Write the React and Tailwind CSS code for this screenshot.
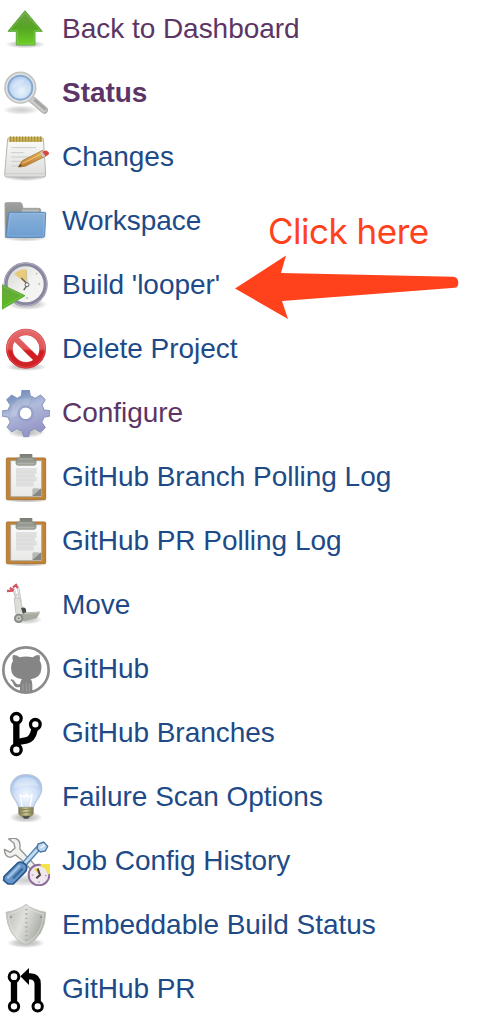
import React from 'react';

function Icon({ children }) {
  return (
    <svg className="h-12 w-12 shrink-0" viewBox="0 0 144 144" fill="none">
      {children}
    </svg>
  );
}

function Gradient({ id, from, mid, to, x2 = 0, y2 = 1 }) {
  return (
    <linearGradient id={id} x1="0" y1="0" x2={x2} y2={y2}>
      <stop offset="0" stopColor={from} />
      {mid && <stop offset="0.5" stopColor={mid} />}
      <stop offset="1" stopColor={to} />
    </linearGradient>
  );
}

function Shadow({ id, cx, cy, rx, ry, strength = 0.3 }) {
  return (
    <>
      <radialGradient id={id}>
        <stop offset="0" stopColor="#000" stopOpacity={strength} />
        <stop offset="0.6" stopColor="#000" stopOpacity={strength * 0.55} />
        <stop offset="1" stopColor="#000" stopOpacity="0" />
      </radialGradient>
      <ellipse cx={cx} cy={cy} rx={rx} ry={ry} fill={`url(#${id})`} />
    </>
  );
}

function UpArrow() {
  return (
    <Icon>
      <Gradient id="up-fill" from="#6f9f4b" mid="#55a522" to="#6cd022" />
      <Shadow id="up-shadow" cx="70" cy="115" rx="60" ry="12" />
      <path d="M69 14 L121 76 H99 V117 H43 V76 H18 Z" fill="url(#up-fill)" stroke="#62a744" strokeWidth="3" strokeLinejoin="round" />
      <path d="M69 20 L114 73 H96 V114 H46 V73 H25 Z" stroke="#9bdc6c" strokeOpacity=".4" strokeWidth="3" />
    </Icon>
  );
}

function Magnifier() {
  return (
    <Icon>
      <radialGradient id="mag-fill" cx=".55" cy=".65" r=".6">
        <stop offset="0" stopColor="#eaf3fc" />
        <stop offset="1" stopColor="#b4d0ef" />
      </radialGradient>
      <Shadow id="mag-shadow" cx="57" cy="120" rx="55" ry="14" strength={0.2} />
      <path d="M85 84 L127 120" stroke="#aeb0ae" strokeWidth="22" strokeLinecap="round" />
      <path d="M85 84 L126 119" stroke="#c9cbc8" strokeWidth="16" strokeLinecap="round" />
      <path d="M99 91 L129 117" stroke="#a2a4a2" strokeWidth="7" strokeLinecap="round" />
      <circle cx="55" cy="53" r="46" fill="#e2e3e1" stroke="#c2c4c1" strokeWidth="5" />
      <circle cx="55" cy="53" r="36" fill="url(#mag-fill)" stroke="#86a8d2" strokeWidth="6" />
      <path d="M30 54 A26 26 0 0 1 68 31 C56 44 46 52 30 54Z" fill="#fff" opacity=".22" />
    </Icon>
  );
}

function Notepad() {
  return (
    <Icon>
      <Gradient id="note-fill" from="#fbfbfa" to="#dcdddb" />
      <Gradient id="pencil-fill" from="#e9ba62" to="#ba772c" />
      <Shadow id="note-shadow" cx="70" cy="129" rx="66" ry="12" />
      <path d="M17 14 H124 L131 121 Q132 128 125 129 H14 Q7 128 8 121 Z" fill="url(#note-fill)" stroke="#b4b6b2" strokeWidth="3" />
      <path d="M10 119 H130" stroke="#c2c3c1" strokeWidth="2" />
      <path d="M20 8 H121 V24 H20 Z" fill="#c9b45c" />
      <path d="M26 7 V23 M35 7 V23 M44 7 V23 M53 7 V23 M62 7 V23 M71 7 V23 M80 7 V23 M89 7 V23 M98 7 V23 M107 7 V23 M116 7 V23" stroke="#a08b3a" strokeWidth="3" />
      <path d="M28 41 H102 M28 56 H65 M28 69 H90 M28 82 H60 M28 96 H49" stroke="#cbcccb" strokeWidth="3" />
      <path d="M49 99 L61 80 L122 49 L132 66 L69 97 Z" fill="url(#pencil-fill)" stroke="#a87638" strokeWidth="2.5" />
      <path d="M62 88 L124 57" stroke="#efca7d" strokeWidth="3" />
      <path d="M49 99 L54 91 L60 96 Z" fill="#54432a" />
      <path d="M115 56 L122 50 L132 65 L123 70 Z" fill="#c9cccb" />
      <path d="M121 54 Q132 45 139 54 Q146 62 131 67 Z" fill="#dc4640" />
    </Icon>
  );
}

function Folder() {
  return (
    <Icon>
      <Gradient id="folder-back" from="#a0a2a0" to="#6b6e6c" />
      <Gradient id="folder-front" from="#8ab1d9" to="#6c9dd1" />
      <Shadow id="folder-shadow" cx="70" cy="120" rx="68" ry="11" strength={0.25} />
      <path d="M9 17 Q9 14 13 14 H55 Q60 14 61 22 L63 31 H111 Q116 31 116 36 V118 H10 Z" fill="url(#folder-back)" stroke="#a0a29f" strokeWidth="3" />
      <path d="M60 34 H112 V46 H60 Z" fill="#b6b8b5" />
      <path d="M25 43 H128 Q132 43 131 48 L128 114 Q127 118 122 118 H16 Q11 118 12 113 L20 48 Q20 43 25 43 Z" fill="url(#folder-front)" stroke="#5787bb" strokeWidth="3" />
      <path d="M25 47 H127 L124 114 H17 Z" stroke="#b9d4ee" strokeOpacity=".35" strokeWidth="2.5" />
    </Icon>
  );
}

function ClockPlay() {
  return (
    <Icon>
      <Gradient id="clock-fill" from="#d3d4cf" mid="#f1f1ef" to="#f8f8f8" x2={1} />
      <Gradient id="play-fill" from="#6aa343" to="#56bd1d" />
      <Shadow id="clock-shadow" cx="76" cy="127" rx="60" ry="17" />
      <circle cx="71" cy="67" r="60" fill="url(#clock-fill)" stroke="#88879f" strokeWidth="12" />
      <circle cx="71" cy="67" r="64" stroke="#b3b2c4" strokeWidth="3" />
      <path d="M72 65 L37 36 Q48 22 73 22 Z" fill="#e7ca7c" />
      <path d="M73 26 L75 62" stroke="#d3bd82" strokeWidth="3" />
      <path d="M58 48 L76 66 M77 68 L65 84" stroke="#62625c" strokeWidth="4" />
      <circle cx="75" cy="68" r="6" fill="#eee" stroke="#666" strokeWidth="3" />
      <circle cx="112" cy="66" r="3" fill="#bbb" />
      <circle cx="75" cy="108" r="3" fill="#bbb" />
      <circle cx="104" cy="35" r="2.5" fill="#bbb" />
      <path d="M-2 67 L69 101 L-2 143 Z" fill="url(#play-fill)" stroke="#5fac40" strokeWidth="3" />
      <path d="M3 74 L61 101 L3 134" stroke="#a5e66f" strokeOpacity=".3" strokeWidth="3" />
    </Icon>
  );
}

function NoEntry() {
  return (
    <Icon>
      <linearGradient id="no-fill" x1="0" y1="10" x2="0" y2="125" gradientUnits="userSpaceOnUse">
        <stop offset="0" stopColor="#e46b6c" />
        <stop offset=".5" stopColor="#df5556" />
        <stop offset=".58" stopColor="#d31b20" />
        <stop offset="1" stopColor="#cf2328" />
      </linearGradient>
      <Shadow id="no-shadow" cx="73" cy="123" rx="62" ry="12" />
      <circle cx="72" cy="68" r="50" fill="#fff" stroke="#d3484c" strokeWidth="20" />
      <circle cx="72" cy="68" r="50" stroke="url(#no-fill)" strokeWidth="17" />
      <path d="M37 34 L107 103" stroke="url(#no-fill)" strokeWidth="18" />
      <circle cx="72" cy="68" r="56" stroke="#ef9797" strokeOpacity=".35" strokeWidth="3" />
    </Icon>
  );
}

function Gear() {
  return (
    <Icon>
      <Gradient id="gear-fill" from="#5879ad" mid="#b0bbdb" to="#9696c8" x2={0.4} />
      <Shadow id="gear-shadow" cx="73" cy="126" rx="58" ry="18" />
      <path
        fillRule="evenodd"
        d="M60 0 H82 L85 18 Q93 20 99 25 L116 15 L130 29 L120 46 Q125 53 126 60 L144 62 V78 L125 82 Q124 90 119 96 L130 113 L115 127 L98 116 Q91 121 84 122 L80 140 H65 L60 122 Q51 121 45 116 L29 126 L15 112 L25 96 Q20 89 19 82 L0 78 V63 L19 60 Q20 52 25 46 L14 29 L29 15 L46 25 Q52 20 58 18 Z M71 51 A19 19 0 1 0 71 89 A19 19 0 1 0 71 51 Z"
        fill="url(#gear-fill)"
        stroke="#8493b8"
        strokeWidth="3"
        strokeLinejoin="round"
      />
      <path d="M30 47 Q48 19 85 26 Q84 48 60 51 Q44 58 44 78 L27 81 Z" fill="#fff" opacity=".15" />
      <circle cx="71" cy="70" r="23" stroke="#7d8bb8" strokeOpacity=".3" strokeWidth="5" />
    </Icon>
  );
}

function Clipboard({ id }) {
  return (
    <Icon>
      <Gradient id={`${id}-page`} from="#fafafa" to="#e9eae8" />
      <Gradient id={`${id}-clip`} from="#777a71" to="#a9aba3" />
      <Shadow id={`${id}-shadow`} cx="72" cy="138" rx="64" ry="9" />
      <rect x="13" y="12" width="118" height="125" rx="3" fill="#c38335" stroke="#ab763a" strokeWidth="3" />
      <path d="M26 20 H119 V128 H26 Z" fill={`url(#${id}-page)`} stroke="#a7a69f" strokeWidth="2.5" />
      <path d="M42 42 H104 V59 H99 V70 H105 V82 H95 V98 H42 Z" fill="#dfe0df" />
      <path d="M42 54 H99 M42 66 H98 M42 78 H99 M42 90 H95" stroke="#d7d9d6" strokeWidth="2" />
      <path d="M91 126 V108 Q91 101 99 103 L118 104 V126 Z" fill="#b7b9b5" />
      <path d="M91 126 L118 103 V126 Z" fill="#858882" />
      <path d="M54 0 H90 V11 Q102 11 102 20 V28 Q102 34 95 34 H49 Q42 34 42 28 V20 Q42 11 54 11 Z" fill={`url(#${id}-clip)`} stroke="#858981" strokeWidth="2" />
      <path d="M50 15 H94 M48 28 H97" stroke="#b2b4ac" strokeWidth="3" />
    </Icon>
  );
}

function HandTruck() {
  return (
    <Icon>
      <Shadow id="truck-shadow" cx="75" cy="113" rx="46" ry="14" strength={0.25} />
      <path d="M36 24 L46 62 M48 16 L56 62" stroke="#b9bbb7" strokeWidth="7" />
      <path d="M37 24 L47 62 M48 17 L56 62" stroke="#eeefed" strokeWidth="3" />
      <path d="M38 40 L54 36" stroke="#cccdca" strokeWidth="4" />
      <path d="M36 50 L52 47 L67 94 L51 104 L42 96 Z" fill="#dcded9" stroke="#b3b6af" strokeWidth="2" />
      <path d="M15 27 L34 26 M23 18 L36 24 M33 16 L42 9 L47 18" stroke="#d45463" strokeWidth="7" />
      <path d="M57 78 Q66 74 72 81 L73 96 L64 99 Z" fill="#4a4d48" />
      <path d="M67 93 L113 90 L104 107 L66 116 L52 103 Z" fill="#a8aba1" stroke="#989b91" strokeWidth="2" />
      <path d="M67 95 L113 91" stroke="#c4c6be" strokeWidth="4" />
      <circle cx="50" cy="109" r="14" fill="#858983" />
      <circle cx="50" cy="109" r="8" fill="#d2d4d0" stroke="#a2a59f" strokeWidth="2" />
      <circle cx="50" cy="109" r="3" fill="#777" />
    </Icon>
  );
}

function Octocat() {
  return (
    <Icon>
      <circle cx="72" cy="72" r="68" fill="#fff" stroke="#8b8b8b" strokeWidth="8" />
      <path
        d="M33 27 Q43 26 53 34 Q71 29 92 34 Q103 26 112 27 Q116 37 113 45 Q120 54 118 68 Q117 94 86 100 Q92 105 91 116 V138 Q72 143 54 138 V123 Q38 127 34 113 Q31 106 26 103 Q25 98 33 101 Q37 104 41 111 Q46 118 54 114 Q55 105 60 100 Q28 96 27 67 Q26 54 33 45 Q29 37 33 27 Z"
        fill="#858585"
      />
      <path d="M63 114 V137 M73 111 V139 M82 114 V137" stroke="#a0a0a0" strokeWidth="3" />
    </Icon>
  );
}

function Branches() {
  return (
    <Icon>
      <path d="M43 26 V121" stroke="#000" strokeWidth="19" />
      <path d="M43 109 C47 88 64 97 81 88 Q97 79 99 45" stroke="#000" strokeWidth="20" />
      <circle cx="43" cy="25" r="14.5" fill="#fff" stroke="#000" strokeWidth="10" />
      <circle cx="43" cy="119" r="14.5" fill="#fff" stroke="#000" strokeWidth="10" />
      <circle cx="100" cy="43" r="14.5" fill="#fff" stroke="#000" strokeWidth="10" />
    </Icon>
  );
}

function Bulb() {
  return (
    <Icon>
      <radialGradient id="bulb-fill" cx=".5" cy=".65" r=".65">
        <stop offset="0" stopColor="#f6faff" />
        <stop offset=".55" stopColor="#d1e1f8" />
        <stop offset="1" stopColor="#9fbfe7" />
      </radialGradient>
      <Gradient id="bulb-base" from="#777249" mid="#cfcb91" to="#77724c" x2={1} y2={0} />
      <Shadow id="bulb-shadow" cx="72" cy="130" rx="50" ry="17" />
      <path d="M72 2 C43 2 26 21 26 46 C26 69 47 78 50 102 H94 C96 80 119 70 119 45 C119 19 101 2 72 2 Z" fill="url(#bulb-fill)" stroke="#bac6d8" strokeWidth="4" />
      <path d="M35 43 C36 21 50 9 73 10 C95 10 108 21 109 39 C88 28 64 34 35 43 Z" fill="#fff" opacity=".3" />
      <path d="M60 98 L55 63 L65 69 L73 61 L80 69 L90 63 L84 98" stroke="#fff" strokeWidth="4" />
      <path d="M50 100 H94 V120 Q88 131 73 131 Q56 131 50 120 Z" fill="url(#bulb-base)" stroke="#9a9675" strokeWidth="2" />
      <path d="M50 108 L94 104 M50 118 L94 114" stroke="#858261" strokeWidth="3" />
      <path d="M61 125 H84 L79 134 H66 Z" fill="#505152" />
    </Icon>
  );
}

function Tools() {
  return (
    <Icon>
      <Shadow id="tools-shadow" cx="70" cy="127" rx="65" ry="18" strength={0.2} />
      <path d="M20 3 L36 0 Q53 3 54 20 V34 L98 80 L116 94 L102 111 L65 71 L41 51 L25 58 Q8 57 7 34 L25 43 L39 30 L36 16 Z" fill="#f0f1ef" stroke="#92958f" strokeWidth="4" strokeLinejoin="round" />
      <path d="M58 88 L111 28" stroke="#4a82b5" strokeWidth="17" />
      <path d="M60 85 L113 26" stroke="#c5daee" strokeWidth="9" />
      <path d="M105 32 L108 18 L125 12 L137 25 L130 39 L115 42 Z" fill="#bdd6ed" stroke="#44769f" strokeWidth="4" />
      <path d="M116 30 L128 20" stroke="#fff" strokeWidth="4" />
      <path d="M6 116 L48 74 Q59 69 70 79 Q80 91 68 103 L34 138 H18 L5 127 Z" fill="#6695c9" stroke="#28588c" strokeWidth="5" />
      <path d="M18 119 L52 84" stroke="#a0c1e2" strokeWidth="7" strokeLinecap="round" />
      <path d="M35 119 L60 94" stroke="#3d6b9c" strokeWidth="7" strokeLinecap="round" />
      <circle cx="111" cy="111" r="31" fill="#f0e8ee" stroke="#8c6d9b" strokeWidth="6" />
      <path d="M116 78 H144 V108 H136 Q133 89 116 85 Z" fill="#f4e34a" />
      <path d="M111 110 L95 94 Q102 88 111 91 Z" fill="#f1d76d" />
      <path d="M107 92 L114 111 L103 121" stroke="#4a4340" strokeWidth="6" />
      <path d="M89 111 H94 M129 113 H134 M111 130 V135" stroke="#9d829f" strokeWidth="3" />
    </Icon>
  );
}

function Shield() {
  return (
    <Icon>
      <Gradient id="shield-fill" from="#b4b6b0" mid="#e0e1dd" to="#a5a8a1" x2={1} y2={0.4} />
      <Shadow id="shield-shadow" cx="72" cy="123" rx="57" ry="15" />
      <path d="M72 7 Q91 23 131 31 Q130 105 72 130 Q16 105 12 31 Q52 24 72 7 Z" fill="url(#shield-fill)" stroke="#c2c4be" strokeWidth="3" />
      <path d="M72 13 Q91 29 124 36 Q122 100 72 123 Q23 101 19 36 Q53 29 72 13 Z" stroke="#dfe1dc" strokeOpacity=".6" strokeWidth="4" />
      <path d="M73 21 V121" stroke="#aeb1aa" strokeWidth="8" strokeDasharray="4 9" />
      <circle cx="27" cy="45" r="3" fill="#888c84" />
      <circle cx="117" cy="45" r="3" fill="#888c84" />
    </Icon>
  );
}

function PullRequest() {
  return (
    <Icon>
      <path d="M36 34 V117" stroke="#000" strokeWidth="19" />
      <path d="M78 31 H85 Q107 32 107 54 V116" stroke="#000" strokeWidth="19" />
      <path d="M55 31 L81 6 V57 Z" fill="#000" />
      <circle cx="36" cy="32" r="14.5" fill="#fff" stroke="#000" strokeWidth="9" />
      <circle cx="36" cy="121" r="14" fill="#fff" stroke="#000" strokeWidth="9" />
      <circle cx="107" cy="121" r="14" fill="#fff" stroke="#000" strokeWidth="9" />
    </Icon>
  );
}

const items = [
  { label: 'Back to Dashboard', icon: <UpArrow />, visited: true },
  { label: 'Status', icon: <Magnifier />, visited: true, active: true },
  { label: 'Changes', icon: <Notepad /> },
  { label: 'Workspace', icon: <Folder /> },
  { label: "Build 'looper'", icon: <ClockPlay /> },
  { label: 'Delete Project', icon: <NoEntry /> },
  { label: 'Configure', icon: <Gear />, visited: true },
  { label: 'GitHub Branch Polling Log', icon: <Clipboard id="branch-log" /> },
  { label: 'GitHub PR Polling Log', icon: <Clipboard id="pr-log" /> },
  { label: 'Move', icon: <HandTruck /> },
  { label: 'GitHub', icon: <Octocat /> },
  { label: 'GitHub Branches', icon: <Branches /> },
  { label: 'Failure Scan Options', icon: <Bulb /> },
  { label: 'Job Config History', icon: <Tools /> },
  { label: 'Embeddable Build Status', icon: <Shield /> },
  { label: 'GitHub PR', icon: <PullRequest /> },
];

export default function App() {
  return (
    <div className="relative h-[1034px] w-[482px] overflow-hidden bg-white font-['Liberation_Sans',Arial,sans-serif]">
      <nav className="flex flex-col gap-4 pt-1.5 pl-0.5">
        {items.map(({ label, icon, visited, active }) => (
          <a key={label} href="#" className="flex h-12 items-center gap-3">
            {icon}
            <span
              className={`pb-0.5 text-[28px] leading-8 tracking-[-0.03px] whitespace-nowrap ${visited ? 'text-[#5c3566]' : 'text-[#204a87]'} ${active ? 'font-bold' : ''}`}
            >
              {label}
            </span>
          </a>
        ))}
      </nav>
      <div className="absolute top-[209px] left-[268px] font-['Inter',sans-serif] text-[35px] leading-[44px] tracking-[-0.5px] whitespace-nowrap text-[#ff421c]">
        Click here
      </div>
      <svg className="absolute top-[250px] left-[230px] h-[75px] w-[235px]" viewBox="230 250 235 75">
        <path
          d="M235 288.5 L286 255.5 L281 273 L453 276.8 Q458.3 277.5 458.3 282.5 Q458.3 287.5 455 287.8 L282 301 L288 319 Z"
          fill="#ff421c"
        />
      </svg>
    </div>
  );
}
